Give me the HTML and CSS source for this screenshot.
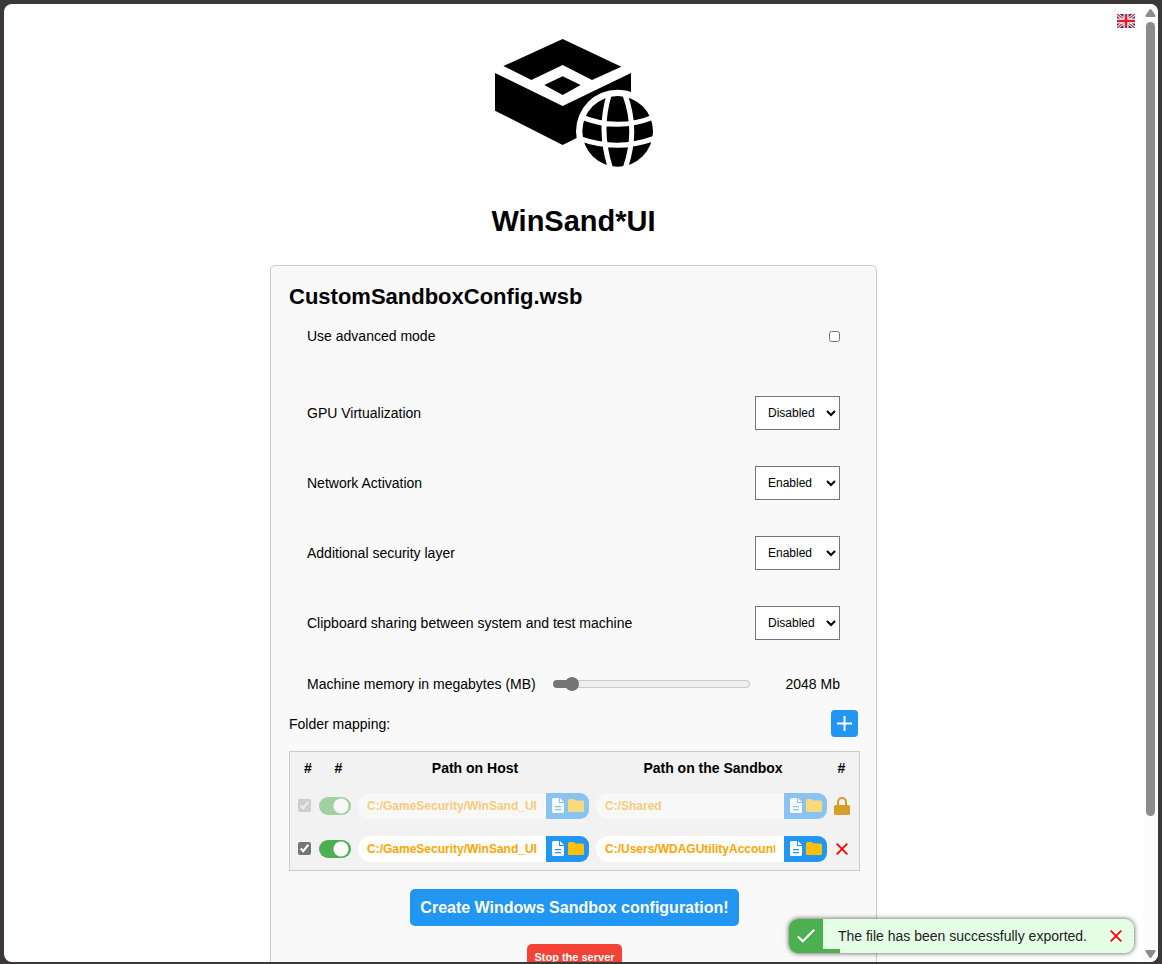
FILE: index.html
```html
<!DOCTYPE html>
<html lang="en">
<head>
<meta charset="utf-8">
<title>WinSand*UI</title>
<link rel="stylesheet" href="styles.css">
</head>
<body>
<svg class="sprite" aria-hidden="true">
  <symbol id="file" viewBox="0 0 12 15"><path fill="currentColor" fill-rule="evenodd" d="M1.500 0H7v5h5v8.500a1.500 1.500 0 0 1-1.500 1.500h-9A1.500 1.500 0 0 1 0 13.500v-12A1.500 1.500 0 0 1 1.500 0zM3 8v1.300h6V8zM3 11v1.300h6V11zM8 0l4 4H8z"/></symbol>
  <symbol id="folder" viewBox="0 0 16 14"><path fill="currentColor" d="M1.500 0H6l1.500 1.500h7A1.500 1.500 0 0 1 16 3v8.500a1.500 1.500 0 0 1-1.500 1.500h-13A1.500 1.500 0 0 1 0 11.500v-10A1.500 1.500 0 0 1 1.500 0z"/></symbol>
  <symbol id="cross" viewBox="0 0 12 12"><path fill="none" stroke="currentColor" stroke-width="1.800" d="M.7.7l10.600 10.600M11.300.7L.7 11.300"/></symbol>
</svg>
<div class="window">
  <main class="page">
    <button class="language" type="button" aria-label="English">
      <svg width="18" height="14" viewBox="0 0 54 42">
        <path fill="#293680" d="M0 0h54v42H0z"/>
        <path stroke="#fff" stroke-width="9" d="M0 0l54 42M54 0L0 42"/>
        <path stroke="#d8263a" stroke-width="4" d="M0 0l54 42M54 0L0 42"/>
        <path stroke="#fff" stroke-width="15" d="M27 0v42M0 21h54"/>
        <path stroke="#d8202f" stroke-width="8" d="M27 0v42M0 21h54"/>
      </svg>
    </button>
    <svg class="logo" width="160" height="128" viewBox="42 57 480 384" aria-hidden="true">
      <path d="M248 57l176 83-88 40-88-45-94 45-84-42z"/>
      <path d="M248 169l54 26-54 30-55-30z"/>
      <path d="M45 159l203 99 205-99v113l-205 103-203-103z"/>
      <circle cx="413" cy="334" r="125" fill="#fff"/>
      <circle cx="413" cy="334" r="106"/>
      <path fill="none" stroke="#fff" stroke-width="15" d="M388 222Q354 333 392 446M434 222Q476 333 435 446M300 289Q413 337 526 289M300 356Q413 396 526 354"/>
    </svg>
    <h1 class="title">WinSand*UI</h1>
    <form class="card">
      <h2 class="card-title">CustomSandboxConfig.wsb</h2>
      <div class="row advanced"><label for="adv">Use advanced mode</label><input class="tick" id="adv" type="checkbox"></div>
      <div class="options">
        <div class="row"><label for="gpu">GPU Virtualization</label><select id="gpu"><option>Disabled</option><option>Enabled</option></select></div>
        <div class="row"><label for="net">Network Activation</label><select id="net"><option>Enabled</option><option>Disabled</option></select></div>
        <div class="row"><label for="sec">Additional security layer</label><select id="sec"><option>Enabled</option><option>Disabled</option></select></div>
        <div class="row"><label for="clip">Clipboard sharing between system and test machine</label><select id="clip"><option>Disabled</option><option>Enabled</option></select></div>
      </div>
      <div class="row memory"><label for="mem">Machine memory in megabytes (MB)</label><input class="slider" id="mem" type="range" min="512" max="24576" step="512" value="2048"><output for="mem">2048 Mb</output></div>
      <div class="mapping-head"><span>Folder mapping:</span><button class="add" type="button" aria-label="Add folder"><svg width="15" height="15" viewBox="0 0 15 15"><path stroke="#fff" stroke-width="2" d="M7.500 0v15M0 7.500h15"/></svg></button></div>
      <table class="mapping">
        <colgroup><col class="col-tick"><col class="col-toggle"><col><col><col class="col-action"></colgroup>
        <thead><tr><th>#</th><th>#</th><th class="wide">Path on Host</th><th class="wide">Path on the Sandbox</th><th>#</th></tr></thead>
        <tbody>
          <tr class="locked">
            <td><input class="tick" type="checkbox" checked disabled aria-label="Map folder 1"></td>
            <td><input class="toggle" type="checkbox" checked disabled aria-label="Enable folder 1"></td>
            <td><div class="path"><input type="text" value="C:/GameSecurity/WinSand_UI" disabled aria-label="Host path 1"><div class="pick"><button type="button" disabled aria-label="File"><svg width="12" height="15"><use href="#file"/></svg></button><button class="dir" type="button" disabled aria-label="Folder"><svg width="16" height="14"><use href="#folder"/></svg></button></div></div></td>
            <td><div class="path"><input type="text" value="C:/Shared" disabled aria-label="Sandbox path 1"><div class="pick"><button type="button" disabled aria-label="File"><svg width="12" height="15"><use href="#file"/></svg></button><button class="dir" type="button" disabled aria-label="Folder"><svg width="16" height="14"><use href="#folder"/></svg></button></div></div></td>
            <td><svg width="16" height="18" viewBox="0 0 16 18"><path fill="none" stroke="#d69e26" stroke-width="2" d="M4 9V5a4 4 0 0 1 8 0v4"/><rect y="8" width="16" height="10" rx="1.500" fill="#d69e26"/></svg></td>
          </tr>
          <tr>
            <td><input class="tick" type="checkbox" checked aria-label="Map folder 2"></td>
            <td><input class="toggle" type="checkbox" checked aria-label="Enable folder 2"></td>
            <td><div class="path"><input type="text" value="C:/GameSecurity/WinSand_UI" aria-label="Host path 2"><div class="pick"><button type="button" aria-label="File"><svg width="12" height="15"><use href="#file"/></svg></button><button class="dir" type="button" aria-label="Folder"><svg width="16" height="14"><use href="#folder"/></svg></button></div></div></td>
            <td><div class="path"><input type="text" value="C:/Users/WDAGUtilityAccount/Desktop" aria-label="Sandbox path 2"><div class="pick"><button type="button" aria-label="File"><svg width="12" height="15"><use href="#file"/></svg></button><button class="dir" type="button" aria-label="Folder"><svg width="16" height="14"><use href="#folder"/></svg></button></div></div></td>
            <td><button class="remove" type="button" aria-label="Remove"><svg width="12" height="12"><use href="#cross"/></svg></button></td>
          </tr>
        </tbody>
      </table>
      <div class="actions">
        <button class="create" type="button">Create Windows Sandbox configuration!</button>
        <button class="stop" type="button">Stop the server</button>
      </div>
    </form>
  </main>
  <div class="scrollbar" aria-hidden="true">
    <svg width="11" height="8" viewBox="0 0 11 8"><path fill="#8b8b8b" d="M5.500 0q.5 0 1 .6l4 6q.3 1.400-.8 1.400H1.300Q.2 8 .5 6.600l4-6q.5-.6 1-.6z"/></svg>
    <div class="track"><div class="thumb"></div></div>
    <svg width="11" height="8" viewBox="0 0 11 8"><path fill="#8b8b8b" d="M5.500 8q-.5 0-1-.6l-4-6Q.2 0 1.300 0h8.400q1.100 0 .8 1.400l-4 6q-.5.6-1 .6z"/></svg>
  </div>
  <div class="toast" role="status">
    <div class="toast-icon"><svg width="18" height="14" viewBox="0 0 18 14"><path fill="none" stroke="#fff" stroke-width="2.200" d="M.8 7.500l5 4.800L17.200.8"/></svg></div>
    <span class="toast-text">The file has been successfully exported.</span>
    <button class="remove" type="button" aria-label="Close"><svg width="12" height="12"><use href="#cross"/></svg></button>
    <div class="toast-progress"></div>
  </div>
</div>
</body>
</html>
```
FILE: styles.css
```css
* { box-sizing: border-box; }

body {
  margin: 0;
  height: 100vh;
  padding: 4px 4px 2px;
  overflow: hidden;
  background: #3a3838;
  color: #000;
  font: 14px/20px "Liberation Sans", Arial, sans-serif;
}

button {
  border: 0;
  padding: 0;
  background: none;
  color: inherit;
  font-family: inherit;
  cursor: pointer;
}

svg { display: block; }
.sprite { position: absolute; width: 0; height: 0; }

.window {
  position: relative;
  display: flex;
  height: 100%;
  overflow: hidden;
  border-radius: 8px;
  background: #fff;
}

.page {
  position: relative;
  flex: 1;
  display: flex;
  flex-direction: column;
  align-items: center;
  padding: 35px 18px 0;
  overflow: hidden;
}

.page > * { flex-shrink: 0; }

.language { position: absolute; top: 10px; right: 8px; }

.title { margin: 37px 0 27px; font-size: 29px; line-height: 34px; }

.card {
  width: 100%;
  max-width: 607px;
  padding: 18px 16px 18px 18px;
  border: 1px solid #ccc;
  border-radius: 5px;
  background: #f9f9f9;
}

.card-title { margin: 0 0 16px; font-size: 22px; line-height: 26px; }

.row {
  display: flex;
  align-items: center;
  justify-content: space-between;
  padding: 0 20px 0 18px;
}

.advanced { height: 20px; margin-bottom: 50px; }
.options { display: flex; flex-direction: column; gap: 36px; }

.tick {
  display: block;
  width: 13px;
  height: 13px;
  margin: 0;
  accent-color: #767676;
}

.row .tick { width: 11px; height: 11px; }

select {
  width: 85px;
  height: 34px;
  padding: 0 0 0 8px;
  border: 1px solid #767676;
  border-radius: 0;
  background: #fff;
  color: #000;
  font: 12px "Liberation Sans", Arial, sans-serif;
}

.memory { margin: 34px 0 16px; }

.slider {
  flex: 1;
  height: 14px;
  margin: 0 36px 0 17px;
  background: none;
  appearance: none;
}

.slider::-webkit-slider-runnable-track {
  height: 8px;
  border: 1px solid #c8c8c8;
  border-radius: 4px;
  background: linear-gradient(to right, #757575 10%, #efefef 10%) border-box;
  border-color: rgba(118, 118, 118, 0.3);
}

.slider::-webkit-slider-thumb {
  width: 14px;
  height: 14px;
  margin-top: -4px;
  border-radius: 50%;
  background: #757575;
  appearance: none;
}

.mapping-head {
  display: flex;
  align-items: center;
  justify-content: space-between;
  margin: 0 2px 14px 0;
}

.add {
  display: grid;
  place-items: center;
  width: 27px;
  height: 27px;
  border-radius: 4px;
  background: #2196f3;
}

.mapping {
  width: 100%;
  table-layout: fixed;
  border: 1px solid #ccc;
  border-spacing: 0;
  background: #f2f2f2;
}

.col-tick { width: 22px; }
.col-toggle { width: 39px; }
.col-action { width: 32px; }

th { height: 32px; padding: 0 0 0 14px; }
th.wide { padding: 0 0 0 10px; }
th:last-child { padding: 0 3px 0 0; }
td { height: 43px; padding: 0 0 0 7px; }
td:first-child { padding-left: 8px; }

.toggle {
  display: block;
  width: 32px;
  height: 18px;
  margin: 0;
  border-radius: 9px;
  background: radial-gradient(circle at 22px 9px, #fff 7px, #4caf50 8px);
  appearance: none;
}

.path { display: flex; }

.path input {
  flex: 1;
  min-width: 0;
  height: 26px;
  padding: 0 9px;
  border: 0;
  border-radius: 13px 0 0 13px;
  background: #fff;
  color: orange;
  font: bold 12px "Liberation Sans", Arial, sans-serif;
}

.pick {
  display: flex;
  align-items: center;
  gap: 4px;
  width: 43px;
  padding-left: 6px;
  border-radius: 0 9px 9px 0;
  background: #2196f3;
  color: #fff;
}

.dir { color: #ffc107; }

.locked .toggle,
.locked .path { opacity: 0.5; }

.remove {
  display: grid;
  place-items: center;
  width: 16px;
  height: 16px;
  color: #f00;
}

.actions {
  display: flex;
  flex-direction: column;
  align-items: center;
  gap: 18px;
  margin-top: 18px;
}

.create,
.stop {
  border-radius: 5px;
  color: #fff;
  font-weight: bold;
}

.create { height: 37px; padding: 0 10px; background: #2196f3; font-size: 16px; }
.stop { height: 25px; padding: 0 7px; background: #f44336; font-size: 11px; }

.scrollbar {
  display: flex;
  flex-direction: column;
  align-items: center;
  gap: 5px;
  width: 15px;
  padding: 5px 0 4px;
  background: #fcfcfc;
}

.track { flex: 1; }
.thumb { width: 9px; height: 86%; border-radius: 5px; background: #8b8b8b; }

.toast {
  position: absolute;
  right: 24px;
  bottom: 9px;
  display: flex;
  align-items: center;
  height: 34px;
  padding-right: 10px;
  overflow: hidden;
  border-radius: 9px;
  background: #e4ffe6;
  box-shadow: 0 0 5px rgba(0, 0, 0, 0.7);
  color: #222;
}

.toast-icon {
  display: grid;
  place-items: center;
  width: 34px;
  height: 34px;
  background: #4caf50;
}

.toast-text { margin: 0 21px 0 15px; }

.toast-progress {
  position: absolute;
  left: 0;
  bottom: 0;
  width: 51px;
  height: 4px;
  background: #4caf50;
}
```
